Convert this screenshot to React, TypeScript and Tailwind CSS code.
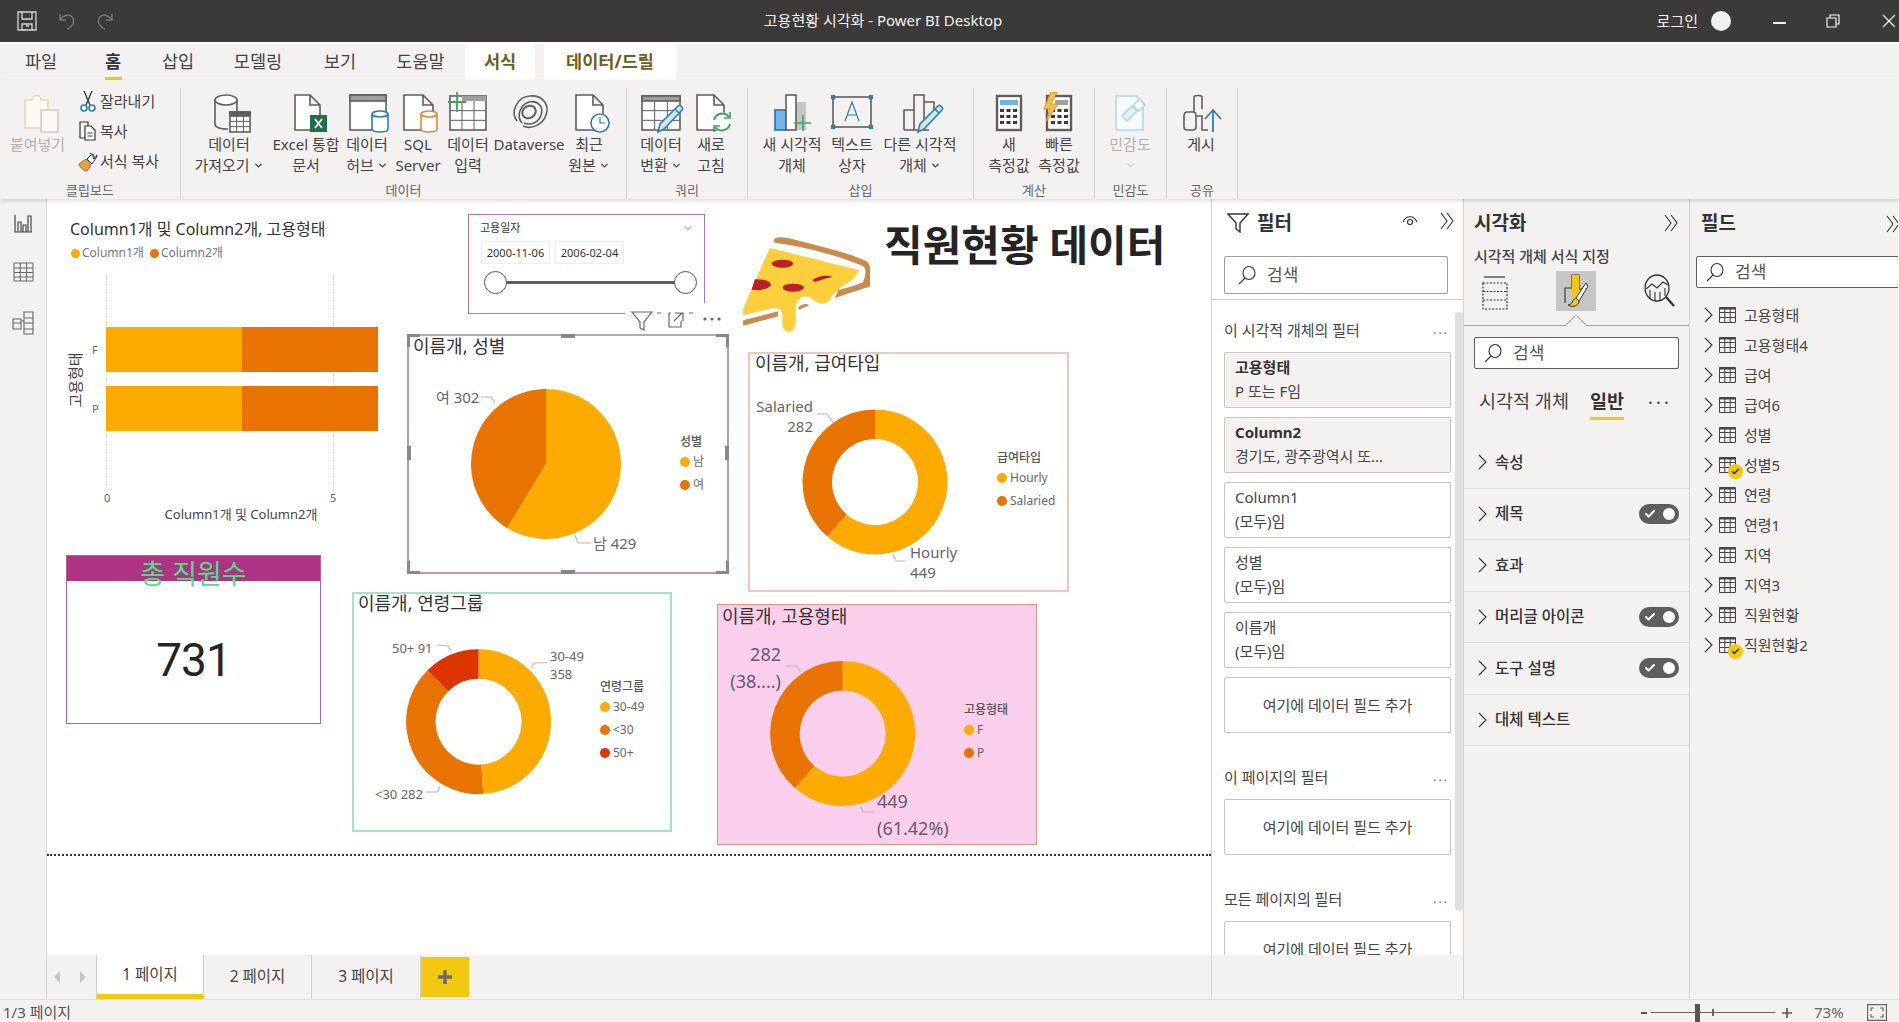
import { ChevronDown, Check } from "lucide-react";
import type { ReactNode } from "react";

const GOLD = "#fdab00";
const ORANGE = "#e97300";
const RED = "#dd3500";
const LINE = "#5f5e5c";

// slice path, angles clockwise from 12 o'clock
const arcPath = (cx: number, cy: number, r: number, ir: number, a0: number, a1: number) => {
  const pt = (rad: number, a: number) => `${cx + rad * Math.sin(a)} ${cy - rad * Math.cos(a)}`;
  const large = a1 - a0 > Math.PI ? 1 : 0;
  if (ir === 0) return `M${cx} ${cy}L${pt(r, a0)}A${r} ${r} 0 ${large} 1 ${pt(r, a1)}Z`;
  return `M${pt(r, a0)}A${r} ${r} 0 ${large} 1 ${pt(r, a1)}L${pt(ir, a1)}A${ir} ${ir} 0 ${large} 0 ${pt(ir, a0)}Z`;
};

const Chart = ({
  cx,
  cy,
  r = 72.5,
  ir = 43,
  slices,
  leaders = [],
}: {
  cx: number;
  cy: number;
  r?: number;
  ir?: number;
  slices: [number, string][];
  leaders?: string[];
}) => {
  const total = slices.reduce((s, x) => s + x[0], 0);
  let a = 0;
  return (
    <svg className="absolute left-0 top-0 w-full h-full overflow-visible">
      {slices.map(([v, c]) => {
        const a0 = a;
        a += (v / total) * Math.PI * 2;
        return <path key={c} d={arcPath(cx, cy, r, ir, a0, a)} fill={c} />;
      })}
      {leaders.map((d) => (
        <path key={d} d={d} fill="none" stroke="#b8b6b4" strokeWidth="1" />
      ))}
    </svg>
  );
};

const Legend = ({ title, items, className }: { title: string; items: [string, string][]; className: string }) => (
  <div className={`absolute ${className}`}>
    <div className="h-[16px] leading-[16px] text-[12px] font-medium text-[#555] whitespace-nowrap">{title}</div>
    {items.map(([t, c]) => (
      <div key={t} className="h-[23px] flex items-center gap-[3px] text-[12px] text-[#666] whitespace-nowrap">
        <span className="w-[10px] h-[10px] rounded-full" style={{ background: c }} />
        {t}
      </div>
    ))}
  </div>
);

const Title = ({ children, className }: { children: ReactNode; className: string }) => (
  <div className={`absolute text-[18px] leading-[20px] text-[#333] whitespace-nowrap ${className}`}>{children}</div>
);

const Label = ({ children, className }: { children: ReactNode; className: string }) => (
  <div className={`absolute whitespace-nowrap text-[#666] ${className}`}>{children}</div>
);

/* ---------- ribbon icons (48x42) ---------- */
const Ico = ({ children }: { children: ReactNode }) => (
  <svg width="48" height="42" viewBox="0 0 48 42" className="shrink-0" fill="none" stroke={LINE} strokeWidth="1.6">
    {children}
  </svg>
);

const Doc = ({ x, w }: { x: number; w: number }) => (
  <path d={`M${x} 3h${w - 10}l10 10v25h-${w}z M${x + w - 10} 3v10h10`} fill="#fff" />
);

const Cyl = ({ x, c }: { x: number; c: string }) => (
  <g stroke={c} fill="#fff">
    <path d={`M${x} 22v15c0 4 16 4 16 0V22`} />
    <ellipse cx={x + 8} cy="22" rx="8" ry="3" />
  </g>
);

const Pen = ({ x = 0 }: { x?: number }) => (
  <g transform={`translate(${x} 0)`}>
    <path d="M21 40l2-8 18-18c2-2 6 2 4 4L27 37z" fill="#cfe6f5" stroke="#2f7fa8" />
    <path d="M38 17l4 4" stroke="#2f7fa8" />
  </g>
);

const GridLines = ({ x, y, w, h, cols, rows }: { x: number; y: number; w: number; h: number; cols: number; rows: number }) => (
  <g strokeWidth="1">
    {Array.from({ length: cols - 1 }, (_, i) => (
      <path key={i} d={`M${x + ((i + 1) * w) / cols} ${y}v${h}`} />
    ))}
    {Array.from({ length: rows - 1 }, (_, i) => (
      <path key={i} d={`M${x} ${y + ((i + 1) * h) / rows}h${w}`} />
    ))}
  </g>
);

const Keys = ({ x }: { x: number }) => (
  <g fill="#3b3a39" stroke="none">
    {[17, 23, 29].map((y) =>
      [0, 6.5, 13].map((d) => <rect key={`${y}${d}`} x={x + d} y={y} width="4" height="3" />)
    )}
  </g>
);

const Icons: Record<string, ReactNode> = {
  getData: (
    <Ico>
      <path d="M10 8v24c0 3 5 5 13 5M32 8v12" />
      <ellipse cx="21" cy="8" rx="11" ry="5" fill="#fff" />
      <rect x="25" y="20" width="20" height="20" fill="#fff" />
      <rect x="25" y="20" width="20" height="4" fill={LINE} />
      <GridLines x={25} y={24} w={20} h={16} cols={3} rows={3} />
    </Ico>
  ),
  excel: (
    <Ico>
      <Doc x={13} w={25} />
      <rect x="28" y="23" width="17" height="17" fill="#1e7145" stroke="none" />
      <path d="M33 27l7 9M40 27l-7 9" stroke="#fff" strokeWidth="1.8" />
    </Ico>
  ),
  hub: (
    <Ico>
      <rect x="7" y="3" width="36" height="35" fill="#fff" />
      <rect x="7" y="3" width="36" height="6" fill="#a19f9d" />
      <Cyl x={29} c="#2f7fa8" />
    </Ico>
  ),
  sql: (
    <Ico>
      <Doc x={10} w={29} />
      <Cyl x={27} c="#d98c38" />
    </Ico>
  ),
  enter: (
    <Ico>
      <rect x="6" y="4" width="36" height="34" fill="#fff" />
      <rect x="18" y="4" width="24" height="5" fill="#a19f9d" stroke="none" />
      <GridLines x={6} y={9} w={36} h={29} cols={3} rows={3} />
      <path d="M13 0v20M4 10h18" stroke="#3fa45b" strokeWidth="1.8" />
    </Ico>
  ),
  dataverse: (
    <Ico>
      <path d="M12 29C5 20 12 5 25 4c12-1 20 8 16 19-3 9-14 15-23 11" />
      <path d="M17 31c-6-7-2-18 7-21 9-2 15 5 12 13-2 7-10 11-17 8" />
      <ellipse cx="24" cy="20" rx="7" ry="6" transform="rotate(-30 24 20)" strokeWidth="2" />
    </Ico>
  ),
  recent: (
    <Ico>
      <Doc x={11} w={27} />
      <circle cx="35" cy="31" r="9" fill="#fff" stroke="#2f7fa8" />
      <path d="M35 25v6h5" stroke="#2f7fa8" strokeWidth="1.2" />
    </Ico>
  ),
  transform: (
    <Ico>
      <rect x="5" y="4" width="38" height="34" fill="#fff" />
      <rect x="5" y="4" width="38" height="5" fill="#a19f9d" />
      <GridLines x={5} y={9} w={38} h={29} cols={3} rows={3} />
      <Pen />
    </Ico>
  ),
  refresh: (
    <Ico>
      <Doc x={10} w={27} />
      <circle cx="35" cy="30" r="10" fill="#fff" stroke="none" />
      <path d="M27 28a8.5 8.5 0 0 1 15-3M43 32a8.5 8.5 0 0 1-15 3" stroke="#3fa45b" strokeWidth="2" />
      <path d="M43 20v6h-6M27 40v-6h6" stroke="#3fa45b" strokeWidth="1.6" />
    </Ico>
  ),
  newVisual: (
    <Ico>
      <rect x="7" y="18" width="11" height="20" fill="#72b6ea" stroke="#2f6ea5" />
      <rect x="28" y="10" width="10" height="28" fill="#c8c6c4" stroke="none" />
      <rect x="18" y="3" width="10" height="35" fill="#fff" />
      <path d="M35 23v16M26 31h17" stroke="#3fa45b" strokeWidth="1.6" />
    </Ico>
  ),
  textBox: (
    <Ico>
      <rect x="5" y="5" width="38" height="30" />
      <g fill="#2f7fa8" stroke="none">
        <rect x="3" y="3" width="4" height="4" />
        <rect x="41" y="3" width="4" height="4" />
        <rect x="3" y="33" width="4" height="4" />
        <rect x="41" y="33" width="4" height="4" />
      </g>
      <path d="M17 29l7-19 7 19M19.5 23h9" stroke="#2f7fa8" strokeWidth="1.2" />
    </Ico>
  ),
  otherVisual: (
    <Ico>
      <path d="M8 38V18h10M18 38V3h10v35M28 10h10v10M8 38h25" />
      <Pen x={1} />
    </Ico>
  ),
  measure: (
    <Ico>
      <rect x="12" y="4" width="24" height="34" fill="#fff" strokeWidth="2.4" />
      <rect x="15" y="8" width="18" height="5" fill="#6cb4ee" stroke="none" />
      <Keys x={15} />
    </Ico>
  ),
  quick: (
    <Ico>
      <rect x="12" y="4" width="24" height="34" fill="#fff" strokeWidth="2.4" />
      <rect x="20" y="8" width="13" height="5" fill="#a19f9d" stroke="none" />
      <Keys x={16} />
      <path d="M16 0L9 17h6l-4 13 12-18h-7l6-12z" fill="#f8c33c" stroke="#d98c38" strokeWidth="1" />
    </Ico>
  ),
  sensitivity: (
    <Ico>
      <path d="M10 4h20l7 6v28H10z" stroke="#b5d5e5" fill="#f7fbfd" />
      <path d="M16 24l10-10 5 5-10 10z" stroke="#b5d5e5" fill="#e3f0f6" />
      <path d="M27 14l6-7 6 6-6 6z" stroke="#b5d5e5" fill="#fff" />
    </Ico>
  ),
  publish: (
    <Ico>
      <path d="M17 20V5c0-2 8-2 8 0v12M10 38c-3 0-3-2-3-3V24c0-2 1-4 3-4h6c2 0 3 2 3 4v11c0 1 0 3-3 3zM19 24h6v14h6" />
      <path d="M36 40V18M28 27l8-9 8 9" stroke="#2f7fa8" strokeWidth="1.8" />
    </Ico>
  ),
  paste: (
    <Ico>
      <path d="M11 8h7c0-6 9-6 9 0h7v28H11z" stroke="#e8d7b8" fill="#fdfaf4" />
      <rect x="27" y="18" width="17" height="22" stroke="#cfcdcb" fill="#f8f8f8" />
    </Ico>
  ),
};

const BigBtn = ({
  icon,
  lines,
  w,
  caret,
  off,
}: {
  icon: string;
  lines: string[];
  w: string;
  caret?: boolean;
  off?: boolean;
}) => (
  <div className={`${w} shrink-0 pt-[4px] flex flex-col items-center leading-[21px] text-[15px] whitespace-nowrap ${off ? "text-[#b3b0ad]" : "text-[#444]"}`}>
    {Icons[icon]}
    {lines.map((l, i) => (
      <div key={l} className="flex items-center gap-[3px]">
        {l}
        {caret && i === lines.length - 1 && <ChevronDown size={11} strokeWidth={3} />}
      </div>
    ))}
  </div>
);

const Group = ({ label, w, children }: { label: string; w: string; children: ReactNode }) => (
  <div className={`${w} shrink-0 h-[111px] mt-[8px] border-r border-[#d6d4d2] flex flex-col`}>
    <div className="h-[93px] flex overflow-visible">{children}</div>
    <div className="h-[18px] leading-[18px] text-center text-[13px] text-[#666]">{label}</div>
  </div>
);

const Scissors = () => (
  <svg width="20" height="22" viewBox="0 0 20 22" fill="none" stroke="#333" strokeWidth="1.3">
    <path d="M6 1l6 14M14 1L8 15" />
    <circle cx="6" cy="18" r="3" stroke="#2f7fa8" strokeWidth="1.6" />
    <circle cx="14" cy="18" r="3" stroke="#2f7fa8" strokeWidth="1.6" />
  </svg>
);

const CopyIco = () => (
  <svg width="20" height="22" viewBox="0 0 20 22" fill="none" stroke="#333" strokeWidth="1.2">
    <path d="M2 2h8v16H2z" />
    <path d="M7 6h6l4 4v10H7z" fill="#fff" />
    <path d="M9.5 13h5M9.5 16h5" />
  </svg>
);

const BrushIco = () => (
  <svg width="22" height="22" viewBox="0 0 22 22" fill="none">
    <path d="M2 14l7-5 5 6-4 6c-3 0-7-3-8-7z" fill="#e4a046" stroke="#a86a1e" />
    <path d="M10 9l5-5 2 1-1 3 1 1 3-4-1 3-4 6z" fill="#fff" stroke="#333" />
    <path d="M13 3l5 5" stroke="#2f7fa8" strokeWidth="1.6" />
  </svg>
);

const SmallBtn = ({ icon, text }: { icon: ReactNode; text: string }) => (
  <div className="h-[30px] flex items-center text-[15px] text-[#444] whitespace-nowrap">
    <div className="w-[25px] flex justify-center">{icon}</div>
    {text}
  </div>
);

const Ribbon = () => (
  <div className="h-[119px] bg-[#f3f2f1] flex relative z-10 shadow-[0_2px_4px_rgba(0,0,0,0.14)]">
    <Group label="클립보드" w="w-[181px]">
      <BigBtn icon="paste" lines={["붙여넣기"]} w="w-[75px]" off />
      <div className="-mt-[2px] flex flex-col">
        <SmallBtn icon={<Scissors />} text="잘라내기" />
        <SmallBtn icon={<CopyIco />} text="복사" />
        <SmallBtn icon={<BrushIco />} text="서식 복사" />
      </div>
    </Group>
    <Group label="데이터" w="w-[446px]">
      <BigBtn icon="getData" lines={["데이터", "가져오기"]} w="w-[96px]" caret />
      <BigBtn icon="excel" lines={["Excel 통합", "문서"]} w="w-[58px]" />
      <BigBtn icon="hub" lines={["데이터", "허브"]} w="w-[64px]" caret />
      <BigBtn icon="sql" lines={["SQL", "Server"]} w="w-[38px]" />
      <BigBtn icon="enter" lines={["데이터", "입력"]} w="w-[62px]" />
      <BigBtn icon="dataverse" lines={["Dataverse"]} w="w-[60px]" />
      <BigBtn icon="recent" lines={["최근", "원본"]} w="w-[60px]" caret />
    </Group>
    <Group label="쿼리" w="w-[121px]">
      <BigBtn icon="transform" lines={["데이터", "변환"]} w="w-[68px]" caret />
      <BigBtn icon="refresh" lines={["새로", "고침"]} w="w-[32px]" />
    </Group>
    <Group label="삽입" w="w-[226px]">
      <BigBtn icon="newVisual" lines={["새 시각적", "개체"]} w="w-[88px]" />
      <BigBtn icon="textBox" lines={["텍스트", "상자"]} w="w-[32px]" />
      <BigBtn icon="otherVisual" lines={["다른 시각적", "개체"]} w="w-[104px]" caret />
    </Group>
    <Group label="계산" w="w-[121px]">
      <BigBtn icon="measure" lines={["새", "측정값"]} w="w-[70px]" />
      <BigBtn icon="quick" lines={["빠른", "측정값"]} w="w-[30px]" />
    </Group>
    <Group label="민감도" w="w-[72px]">
      <div className="w-[70px] shrink-0 pt-[4px] flex flex-col items-center leading-[21px] text-[15px] text-[#b3b0ad]">
        {Icons.sensitivity}
        <div>민감도</div>
        <div className="h-[21px] flex items-center">
          <ChevronDown size={11} strokeWidth={2} />
        </div>
      </div>
    </Group>
    <Group label="공유" w="w-[71px]">
      <BigBtn icon="publish" lines={["게시"]} w="w-[68px]" />
    </Group>
  </div>
);

const TitleBar = () => (
  <div className="h-[42px] bg-[#3b3a39] flex items-center relative">
    <svg width="20" height="20" viewBox="0 0 20 20" fill="none" stroke="#d8d6d4" strokeWidth="1.3" className="ml-[17px]">
      <path d="M1 1h18v18H1zM5 1v7h10V1M5 19v-6h10v6M9 15h3" />
    </svg>
    <svg width="20" height="20" viewBox="0 0 20 20" fill="none" stroke="#7a7876" strokeWidth="1.3" className="ml-[20px]">
      <path d="M3 3v6h6M3 9c3-5 10-7 13-2 2 5-1 9-6 11" />
    </svg>
    <svg width="20" height="20" viewBox="0 0 20 20" fill="none" stroke="#7a7876" strokeWidth="1.3" className="ml-[18px]">
      <path d="M17 3v6h-6M17 9c-3-5-10-7-13-2-2 5 1 9 6 11" />
    </svg>
    <div className="ml-[648px] w-[240px] -mt-[1px] text-center text-[15px] text-[#f3f2f1] whitespace-nowrap">고용현황 시각화 - Power BI Desktop</div>
    <div className="ml-auto flex items-center">
      <span className="text-[15px] text-[#f3f2f1] whitespace-nowrap">로그인</span>
      <span className="ml-[13px] w-[20px] h-[20px] rounded-full bg-[#f3f2f1]" />
      <span className="ml-[42px] w-[13px] h-[1.5px] bg-[#f3f2f1] mt-[4px]" />
      <svg width="14" height="14" viewBox="0 0 14 14" fill="none" stroke="#f3f2f1" strokeWidth="1.2" className="ml-[40px]">
        <path d="M1 4h9v9H1zM4 4V1h9v9h-3" />
      </svg>
      <svg width="14" height="14" viewBox="0 0 14 14" fill="none" stroke="#f3f2f1" strokeWidth="1.3" className="ml-[42px] mr-[3px]">
        <path d="M1 1l12 12M13 1L1 13" />
      </svg>
    </div>
  </div>
);

const MenuTabs = () => (
  <div className="h-[38px] bg-[#f3f2f1] border-t-[2px] border-white flex text-[17.5px] text-[#444] leading-[34px] text-center whitespace-nowrap">
    <div className="w-[82px]">파일</div>
    <div className="w-[62px] font-bold text-[#333] relative">
      홈
      <span className="absolute left-[23px] top-[33px] w-[17px] h-[3px] bg-[#f2c811]" />
    </div>
    <div className="w-[68px]">삽입</div>
    <div className="w-[92px]">모델링</div>
    <div className="w-[72px]">보기</div>
    <div className="w-[89px]">도움말</div>
    <div className="w-[70px] -mt-[2px] pt-[2px] bg-white font-bold text-[#6f5f18]">서식</div>
    <div className="w-[132px] ml-[9px] -mt-[2px] pt-[2px] bg-white font-bold text-[#6f5f18]">데이터/드릴</div>
  </div>
);

const LeftRail = () => (
  <div className="w-[47px] shrink-0 bg-[#f3f2f1] border-r border-[#d6d4d2] flex flex-col items-center pt-[15px] gap-[27px]">
    <svg width="20" height="20" viewBox="0 0 20 20" fill="none" stroke="#444" strokeWidth="1.2">
      <path d="M2 1v17h17M5 8h3v10H5zM10 11h3v7h-3zM15 2h3v16h-3z" />
    </svg>
    <svg width="21" height="21" viewBox="0 0 21 21" fill="none" stroke="#666" strokeWidth="1">
      <path d="M1 2h19v18H1zM1 7h19M1 11.5h19M1 16h19M7.3 2v18M13.6 2v18" />
    </svg>
    <svg width="22" height="24" viewBox="0 0 22 24" fill="none" stroke="#666" strokeWidth="1.1" className="mt-[2px]">
      <path d="M1 8h8v10H1zM1 12h8M12 1h9v22h-9zM12 7h9M12 12h9M12 18h9M9 10h3" />
    </svg>
  </div>
);

const Handle = ({ className }: { className: string }) => <span className={`absolute bg-[#8a8886] ${className}`} />;

const BarVisual = () => (
  <div className="absolute left-[13px] top-[16px] w-[330px] h-[315px]">
    <Title className="left-[10px] top-[4px] !text-[16px]">Column1개 및 Column2개, 고용형태</Title>
    <div className="absolute left-[11px] top-[30px] h-[16px] flex items-center text-[12px] text-[#777] whitespace-nowrap">
      <span className="w-[9px] h-[9px] rounded-full bg-[#fdab00] mr-[2px]" />
      Column1개
      <span className="w-[9px] h-[9px] rounded-full bg-[#e97300] ml-[6px] mr-[2px]" />
      Column2개
    </div>
    <span className="absolute left-[46px] top-[60px] h-[215px] border-l border-dotted border-[#ddd]" />
    <span className="absolute left-[273px] top-[60px] h-[215px] border-l border-dotted border-[#ddd]" />
    <div className="absolute left-[46px] top-[112px] w-[272px] flex flex-col gap-[14px]">
      <div className="h-[45px] flex">
        <div className="w-1/2 bg-[#fdab00]" />
        <div className="w-1/2 bg-[#e97300]" />
      </div>
      <div className="h-[45px] flex">
        <div className="w-1/2 bg-[#fdab00]" />
        <div className="w-1/2 bg-[#e97300]" />
      </div>
    </div>
    <Label className="left-[32px] top-[127px] text-[11px] leading-[16px]">F</Label>
    <Label className="left-[32px] top-[186px] text-[11px] leading-[16px]">P</Label>
    <Label className="left-[44px] top-[275px] text-[11px] leading-[16px]">0</Label>
    <Label className="left-[270px] top-[275px] text-[11px] leading-[16px]">5</Label>
    <div className="absolute left-[81px] top-[289px] w-[200px] text-center text-[13px] leading-[20px] text-[#444] whitespace-nowrap">Column1개 및 Column2개</div>
    <div className="absolute left-[-25px] top-[155px] w-[80px] h-[20px] -rotate-90 text-center text-[15px] leading-[20px] text-[#444]">고용형태</div>
  </div>
);

const Slicer = () => (
  <div className="absolute left-[421px] top-[15px] w-[237px] h-[100px] border-[1.5px] border-[#b5739f]">
    <div className="absolute left-[11px] top-[5px] text-[11px] leading-[16px] text-[#333]">고용일자</div>
    <ChevronDown size={12} strokeWidth={1.6} className="absolute left-[213px] top-[7px] text-[#666]" />
    <div className="absolute left-[12px] top-[26px] flex gap-[5px]">
      <div className="w-[69px] h-[23px] border border-[#eee] text-[11px] leading-[21px] text-center text-[#333]">2000-11-06</div>
      <div className="w-[69px] h-[23px] border border-[#eee] text-[11px] leading-[21px] text-center text-[#333]">2006-02-04</div>
    </div>
    <div className="absolute left-[26px] top-[66px] w-[190px] h-[3px] bg-[#5f5e5c]" />
    <span className="absolute left-[15px] top-[56px] w-[23px] h-[23px] rounded-full bg-white border-[1.5px] border-[#555]" />
    <span className="absolute left-[205px] top-[56px] w-[23px] h-[23px] rounded-full bg-white border-[1.5px] border-[#555]" />
  </div>
);

const VisualHeader = () => (
  <div className="absolute left-[578px] top-[104px] w-[110px] h-[30px] bg-white">
    <svg width="110" height="30" fill="none" stroke="#666" strokeWidth="1.2">
      <path d="M7 9h20l-8 10v8l-4-2v-6z" />
      <path d="M32 10h4M64 10h4" />
      <path d="M46 10h-2v14h12v-6M50 10h8v8M57 10l-8 8" />
      <circle cx="80" cy="16" r="1" fill="#666" />
      <circle cx="87" cy="16" r="1" fill="#666" />
      <circle cx="94" cy="16" r="1" fill="#666" />
    </svg>
  </div>
);

const PieVisual = () => (
  <div className="absolute left-[360px] top-[135px] w-[322px] h-[240px] border-2 border-[#c095b8] border-t-[#b0aeac] bg-white">
    <Chart
      cx={137}
      cy={128}
      r={75}
      ir={0}
      slices={[
        [429, GOLD],
        [302, ORANGE],
      ]}
      leaders={["M72 61h10l4 6", "M166 199l3 8h13"]}
    />
    <Title className="left-[4px] top-[0px]">이름개, 성별</Title>
    <Label className="left-[27px] top-[51px] text-[15px] leading-[20px]">여 302</Label>
    <Label className="left-[184px] top-[197px] text-[15px] leading-[20px]">남 429</Label>
    <Legend
      title="성별"
      className="left-[271px] top-[98px]"
      items={[
        ["남", GOLD],
        ["여", ORANGE],
      ]}
    />
    <Handle className="-left-[2px] -top-[2px] w-[13px] h-[3px]" />
    <Handle className="-left-[2px] -top-[2px] w-[3px] h-[13px]" />
    <Handle className="-right-[2px] -top-[2px] w-[13px] h-[3px]" />
    <Handle className="-right-[2px] -top-[2px] w-[3px] h-[13px]" />
    <Handle className="-left-[2px] -bottom-[2px] w-[13px] h-[3px]" />
    <Handle className="-left-[2px] -bottom-[2px] w-[3px] h-[13px]" />
    <Handle className="-right-[2px] -bottom-[2px] w-[13px] h-[3px]" />
    <Handle className="-right-[2px] -bottom-[2px] w-[3px] h-[13px]" />
    <Handle className="left-[152px] -top-[2px] w-[14px] h-[4px]" />
    <Handle className="left-[152px] -bottom-[2px] w-[14px] h-[4px]" />
    <Handle className="-left-[2px] top-[110px] w-[4px] h-[14px]" />
    <Handle className="-right-[2px] top-[110px] w-[4px] h-[14px]" />
  </div>
);

const Pizza = () => (
  <svg className="absolute left-[696px] top-[38px]" width="127" height="95" viewBox="130 110 380 285">
    <path d="M222 118C230 105 260 112 300 122C370 140 450 160 495 180C510 188 512 200 511 215L511 258C480 268 440 280 405 293L415 270C440 262 470 255 490 245C498 225 500 205 490 198C430 170 300 135 225 128Z" fill="#c98a4b" />
    <path d="M130 360L235 333V348L130 376ZM295 322C305 310 320 308 328 315L297 328Z" fill="#c98a4b" />
    <path d="M210 143L478 210C470 225 460 240 440 250C420 260 405 275 395 290C385 310 370 315 350 305C335 295 318 280 300 295C290 305 285 320 288 345C290 370 285 395 268 395C250 395 245 375 248 350C250 335 240 322 225 322L130 345V325Z" fill="#fdcf3d" />
    <ellipse cx="248" cy="190" rx="32" ry="12" fill="#bb2026" />
    <ellipse cx="280" cy="262" rx="32" ry="12" fill="#bb2026" />
    <path d="M165 237C195 235 215 245 213 255C205 268 175 272 155 268ZM338 240C350 228 380 222 398 230C380 234 360 240 345 245Z" fill="#bb2026" />
  </svg>
);

const SalaryVisual = () => (
  <div className="absolute left-[701px] top-[153px] w-[321px] h-[240px] border-2 border-[#f0c6b6]">
    <Chart
      cx={125}
      cy={128}
      slices={[
        [449, GOLD],
        [282, ORANGE],
      ]}
      leaders={["M67 60h10l6 8", "M143 200l3 7h9"]}
    />
    <Title className="left-[5px] top-[-1px]">이름개, 급여타입</Title>
    <Label className="left-[-7px] top-[42px] w-[70px] text-right text-[15px] leading-[20px]">
      Salaried
      <br />
      282
    </Label>
    <Label className="left-[160px] top-[188px] text-[15px] leading-[20px]">
      Hourly
      <br />
      449
    </Label>
    <Legend
      title="급여타입"
      className="left-[247px] top-[96px]"
      items={[
        ["Hourly", GOLD],
        ["Salaried", ORANGE],
      ]}
    />
  </div>
);

const KpiCard = () => (
  <div className="absolute left-[19px] top-[356px] w-[255px] h-[169px] border-[1.5px] border-[#b7609f] flex flex-col">
    <div className="h-[25px] bg-[#ae3383] text-center text-[27px] leading-[26px] text-[#4be38a]">
      <span className="relative top-[5px]">총 직원수</span>
    </div>
    <div className="flex-1 flex items-center justify-center pt-[16px] font-['Roboto',sans-serif] text-[46px] tracking-[-1px] text-[#252423]">731</div>
  </div>
);

const AgeVisual = () => (
  <div className="absolute left-[305px] top-[393px] w-[320px] h-[240px] border-2 border-[#a0e6c4]">
    <Chart
      cx={124.6}
      cy={127.7}
      slices={[
        [358, GOLD],
        [282, ORANGE],
        [91, RED],
      ]}
      leaders={["M83 51l11.6 1l2.4 6.7", "M193 68.7l-13 .3l-3 5", "M72 198h11.5l2.5-5.3"]}
    />
    <Title className="left-[4px] top-[-1px]">이름개, 연령그룹</Title>
    <Label className="left-[38px] top-[44px] text-[13px] leading-[20px]">50+ 91</Label>
    <Label className="left-[196px] top-[53px] text-[13px] leading-[18px]">
      30-49
      <br />
      358
    </Label>
    <Label className="left-[21px] top-[190px] text-[13px] leading-[20px]">&lt;30 282</Label>
    <Legend
      title="연령그룹"
      className="left-[246px] top-[85px]"
      items={[
        ["30-49", GOLD],
        ["<30", ORANGE],
        ["50+", RED],
      ]}
    />
  </div>
);

const TypeVisual = () => (
  <div className="absolute left-[670px] top-[405px] w-[320px] h-[241px] border-[1.5px] border-[#e58f7e] bg-[#f9cfeb]">
    <Chart
      cx={124.7}
      cy={128.5}
      slices={[
        [449, GOLD],
        [282, ORANGE],
      ]}
      leaders={["M67.7 61H79l3.7 5.7", "M142.7 200.7l2.3 6.3h11.7"]}
    />
    <Title className="left-[4px] top-[1px]">이름개, 고용형태</Title>
    <Label className="left-[-17px] top-[36px] w-[80px] text-right text-[18px] leading-[27px] !text-[#6a5870]">
      282
      <br />
      (38....)
    </Label>
    <Label className="left-[159px] top-[183px] text-[18px] leading-[27px] !text-[#6a5870]">
      449
      <br />
      (61.42%)
    </Label>
    <Legend
      title="고용형태"
      className="left-[246px] top-[97px]"
      items={[
        ["F", GOLD],
        ["P", ORANGE],
      ]}
    />
  </div>
);

const Canvas = () => (
  <div className="h-[756px] relative bg-white overflow-hidden">
    <BarVisual />
    <Slicer />
    <Pizza />
    <div className="absolute left-[837px] top-[20px] text-[42px] leading-[52px] font-bold text-[#252423] whitespace-nowrap">직원현황 데이터</div>
    <SalaryVisual />
    <KpiCard />
    <AgeVisual />
    <TypeVisual />
    <PieVisual />
    <VisualHeader />
    <div className="absolute left-0 top-[655px] w-full border-t-2 border-dotted border-[#333]" />
  </div>
);

const PageTabs = () => (
  <div className="h-[44px] bg-[#f3f2f1] flex text-[15.5px] text-[#444]">
    <div className="w-[49px] flex items-center pl-[7px] gap-[20px]">
      <span className="w-0 h-0 border-y-[6px] border-y-transparent border-r-[6px] border-r-[#c8c6c4]" />
      <span className="w-0 h-0 border-y-[6px] border-y-transparent border-l-[6px] border-l-[#c8c6c4]" />
    </div>
    <div className="w-[108px] bg-white border-x border-[#d2d0ce] border-b-[5px] border-b-[#f2c811] flex items-center justify-center">1 페이지</div>
    <div className="w-[108px] border-r border-[#d2d0ce] flex items-center justify-center">2 페이지</div>
    <div className="w-[109px] border-r border-[#d2d0ce] flex items-center justify-center">3 페이지</div>
    <div className="w-[48px] h-[40px] mt-[2px] bg-[#f2c811] flex items-center justify-center">
      <svg width="14" height="14" viewBox="0 0 14 14" stroke="#6b6b6b" strokeWidth="3.4">
        <path d="M7 0v14M0 7h14" />
      </svg>
    </div>
  </div>
);

const SearchIco = () => (
  <svg width="20" height="20" viewBox="0 0 20 20" fill="none" stroke="#333" strokeWidth="1.1" className="shrink-0">
    <ellipse cx="12" cy="8" rx="6" ry="6.5" />
    <path d="M8 13l-6 6" />
  </svg>
);

const Search = ({ className }: { className: string }) => (
  <div className={`bg-white border border-[#a19f9d] rounded-[2px] flex items-center gap-[10px] text-[17px] text-[#555] ${className}`}>
    <SearchIco />
    검색
  </div>
);

const Dbl = ({ className }: { className?: string }) => (
  <svg width="14" height="18" viewBox="0 0 14 18" fill="none" stroke="#333" strokeWidth="1.1" className={className}>
    <path d="M1 1l6 8-6 8M7 1l6 8-6 8" />
  </svg>
);

const FilterCard = ({ title, sub, active, bold }: { title: string; sub: string; active?: boolean; bold?: boolean }) => (
  <div className={`h-[56px] mx-[12px] border border-[#c8c6c4] rounded-[2px] px-[10px] pt-[2px] text-[15px] leading-[24px] text-[#444] whitespace-nowrap ${active ? "bg-[#f3f2f1]" : "bg-white"}`}>
    <div className={bold ? "font-bold text-[#333]" : ""}>{title}</div>
    <div>{sub}</div>
  </div>
);

const AddCard = () => (
  <div className="h-[56px] shrink-0 mx-[12px] border border-[#c8c6c4] rounded-[2px] flex items-center justify-center text-[15px] text-[#444] bg-white">여기에 데이터 필드 추가</div>
);

const Section = ({ text, h }: { text: string; h: string }) => (
  <div className={`${h} shrink-0 pl-[12px] pr-[14px] pb-[12px] flex items-end justify-between text-[15px] leading-[20px] text-[#444]`}>
    {text}
    <span className="tracking-[2px] text-[12px] text-[#666]">...</span>
  </div>
);

const FilterPanel = () => (
  <div className="w-[252px] shrink-0 bg-[#f3f2f1] border-l border-[#d6d4d2] flex flex-col">
    <div className="h-[756px] bg-white overflow-hidden relative flex flex-col">
      <div className="h-[48px] shrink-0 flex items-center pl-[15px] whitespace-nowrap">
        <svg width="22" height="20" viewBox="0 0 22 20" fill="none" stroke="#333" strokeWidth="1.4" className="shrink-0">
          <path d="M1 1h20l-8 9v9l-4-3v-6z" />
        </svg>
        <span className="ml-[8px] w-[38px] text-[19px] font-bold text-[#333]">필터</span>
        <svg width="16" height="12" viewBox="0 0 16 12" fill="none" stroke="#333" strokeWidth="1.2" className="ml-[107px] -mt-[4px] shrink-0">
          <path d="M1 7c3-7 11-7 14 0" />
          <circle cx="8" cy="7" r="2.5" />
        </svg>
        <Dbl className="ml-[22px] -mt-[4px] shrink-0" />
      </div>
      <div className="h-[53px] shrink-0 pt-[9px] mx-0 border-b border-[#c8c6c4]">
        <Search className="h-[38px] ml-[12px] mr-[15px] pl-[12px]" />
      </div>
      <Section text="이 시각적 개체의 필터" h="h-[52px]" />
      <div className="flex flex-col gap-[9px]">
        <FilterCard title="고용형태" sub="P 또는 F임" active bold />
        <FilterCard title="Column2" sub="경기도, 광주광역시 또..." active bold />
        <FilterCard title="Column1" sub="(모두)임" />
        <FilterCard title="성별" sub="(모두)임" />
        <FilterCard title="이름개" sub="(모두)임" />
        <AddCard />
      </div>
      <Section text="이 페이지의 필터" h="h-[66px]" />
      <AddCard />
      <Section text="모든 페이지의 필터" h="h-[66px]" />
      <AddCard />
      <div className="absolute right-0 top-[113px] w-[8px] h-[599px] rounded-full bg-[#e1dfdd]" />
    </div>
  </div>
);

const Chev = () => (
  <svg width="9" height="16" viewBox="0 0 9 16" fill="none" stroke="#333" strokeWidth="1.1" className="shrink-0">
    <path d="M1 1l7 7-7 7" />
  </svg>
);

const Toggle = () => (
  <div className="ml-auto w-[40px] h-[20px] rounded-full bg-[#605e5c] flex items-center pl-[5px] pr-[4px] justify-between">
    <Check size={12} strokeWidth={4} className="text-white" />
    <span className="w-[12px] h-[12px] rounded-full bg-white" />
  </div>
);

const Row = ({ text, on }: { text: string; on?: boolean }) => (
  <div className="h-[51.5px] border-b border-[#e1dfdd] flex items-center pl-[14px] pr-[10px] text-[15.5px] font-medium text-[#333]">
    <Chev />
    <span className="ml-[8px]">{text}</span>
    {on && <Toggle />}
  </div>
);

const VizPanel = () => (
  <div className="w-[226px] shrink-0 bg-[#f3f2f1] border-l border-[#d6d4d2] flex flex-col">
    <div className="h-[48px] shrink-0 flex items-center justify-between pl-[10px] pr-[11px]">
      <span className="text-[19px] font-bold text-[#333]">시각화</span>
      <Dbl />
    </div>
    <div className="h-[20px] -mt-[1px] pl-[10px] text-[15px] leading-[20px] font-medium text-[#444] whitespace-nowrap">시각적 개체 서식 지정</div>
    <div className="h-[55px] mt-[5px] border-b border-[#a19f9d] relative flex items-start pl-[18px]">
      <svg width="26" height="34" viewBox="0 0 26 34" fill="none" stroke="#333" strokeWidth="1.2" className="mt-[5px]">
        <path d="M2 1h21" />
        <path d="M1 7h24v26H1zM1 15.5h24M1 24h24" strokeDasharray="2 1.5" />
      </svg>
      <div className="ml-[48px] w-[40px] h-[40px] bg-[#c8c6c4] flex items-center justify-center">
        <svg width="26" height="36" viewBox="0 0 26 36" fill="none">
          <path d="M2 30V15h7V2h7v14h7" stroke="#333" strokeWidth="1.1" />
          <rect x="9" y="2" width="7" height="22" fill="#f2c811" />
          <path d="M23 10L13 25l3 3L25 13z" fill="#fff" stroke="#333" strokeWidth="1" />
          <path d="M13 25c-4 2-3 6-8 7 5 3 11 1 11-4z" fill="#f2c811" stroke="#333" strokeWidth="1" />
        </svg>
      </div>
      <svg width="32" height="34" viewBox="0 0 32 34" fill="none" stroke="#333" strokeWidth="1.3" className="ml-[47px] mt-[3px]">
        <ellipse cx="14" cy="14" rx="12" ry="13" />
        <path d="M23 23l8 9" strokeWidth="2.4" />
        <path d="M7 25v-9M12 27V18M17 27V18M22 22V14M3 15l6-5 5 4 6-6 5 3" strokeWidth="1.1" />
      </svg>
      <svg width="22" height="11" viewBox="0 0 22 11" className="absolute left-[101px] -bottom-[1px]">
        <path d="M0 11L11 0l11 11" fill="#f3f2f1" stroke="#a19f9d" />
      </svg>
    </div>
    <Search className="h-[32px] mt-[11px] ml-[10px] mr-[10px] pl-[8px] !border-[#605e5c]" />
    <div className="h-[52px] relative flex items-start pt-[18px] pl-[15px] text-[18.5px] leading-[28px] text-[#444] whitespace-nowrap">
      시각적 개체
      <span className="ml-[21px] font-bold text-[#333] border-b-[3px] border-[#f2c811] h-[33px]">일반</span>
      <span className="ml-[24px] tracking-[3px] -mt-[4px] text-[#444]">...</span>
    </div>
    <div className="mt-[16px]">
      <Row text="속성" />
      <Row text="제목" on />
      <Row text="효과" />
      <Row text="머리글 아이콘" on />
      <Row text="도구 설명" on />
      <Row text="대체 텍스트" />
    </div>
  </div>
);

const TableIco = () => (
  <svg width="17" height="16" viewBox="0 0 17 16" fill="none" stroke="#444" strokeWidth="1" className="shrink-0">
    <path d="M.5.5h16v15H.5zM.5 5.5h16M.5 10.5h16M5.8 1v14.5M11.2 1v14.5" />
    <path d="M.5 1.5h16" strokeWidth="2" />
  </svg>
);

const FieldRow = ({ text, mark }: { text: string; mark?: boolean }) => (
  <div className="h-[30px] flex items-center pl-[14px] text-[15px] text-[#444] whitespace-nowrap">
    <Chev />
    <div className="ml-[6px] relative">
      <TableIco />
      {mark && (
        <span className="absolute left-[9px] top-[7px] w-[15px] h-[15px] rounded-full bg-[#f2c811] flex items-center justify-center">
          <Check size={9} strokeWidth={4} className="text-[#333]" />
        </span>
      )}
    </div>
    <span className="ml-[8px]">{text}</span>
  </div>
);

const fields: [string, boolean?][] = [
  ["고용형태"],
  ["고용형태4"],
  ["급여"],
  ["급여6"],
  ["성별"],
  ["성별5", true],
  ["연령"],
  ["연령1"],
  ["지역"],
  ["지역3"],
  ["직원현황"],
  ["직원현황2", true],
];

const FieldPanel = () => (
  <div className="w-[209px] shrink-0 bg-[#f3f2f1] border-l border-[#d6d4d2] overflow-hidden relative">
    <div className="h-[48px] flex items-center pl-[11px]">
      <span className="text-[19px] font-bold text-[#333]">필드</span>
      <Dbl className="absolute left-[196px] top-[16px]" />
    </div>
    <Search className="h-[32px] w-[220px] mt-[9px] ml-[6px] pl-[8px] !border-[#605e5c]" />
    <div className="mt-[12px]">
      {fields.map(([t, m]) => (
        <FieldRow key={t} text={t} mark={m} />
      ))}
    </div>
  </div>
);

const StatusBar = () => (
  <div className="h-[23px] bg-[#f3f2f1] border-t border-[#e1dfdd] flex items-center pl-[3px] pt-[3px] text-[15px] text-[#555]">
    1/3 페이지
    <div className="ml-auto flex items-center text-[#666]">
      <span className="w-[6px] h-[2px] bg-[#555]" />
      <div className="ml-[4px] w-[124px] h-[1.5px] bg-[#666] relative">
        <span className="absolute left-[44px] -top-[8px] w-[5px] h-[18px] bg-[#555]" />
        <span className="absolute left-[61px] -top-[3px] w-[1.5px] h-[7px] bg-[#666]" />
      </div>
      <svg width="10" height="10" viewBox="0 0 10 10" stroke="#555" strokeWidth="1.6" className="ml-[7px]">
        <path d="M5 0v10M0 5h10" />
      </svg>
      <span className="ml-[22px] w-[36px]">73%</span>
      <svg width="20" height="17" viewBox="0 0 20 17" fill="none" stroke="#666" strokeWidth="1.2" className="ml-[17px] mr-[12px]">
        <path d="M.6.6h18.8v15.8H.6z" />
        <path d="M4 7V4h3M13 4h3v3M16 10v3h-3M7 13H4v-3" />
      </svg>
    </div>
  </div>
);

export default function App() {
  return (
    <div className="w-[1899px] h-[1022px] overflow-hidden bg-white font-['Noto_Sans','Noto_Sans_CJK_KR',sans-serif]">
      <TitleBar />
      <MenuTabs />
      <Ribbon />
      <div className="h-[800px] flex">
        <LeftRail />
        <div className="w-[1164px] shrink-0 flex flex-col">
          <Canvas />
          <PageTabs />
        </div>
        <FilterPanel />
        <VizPanel />
        <FieldPanel />
      </div>
      <StatusBar />
    </div>
  );
}
